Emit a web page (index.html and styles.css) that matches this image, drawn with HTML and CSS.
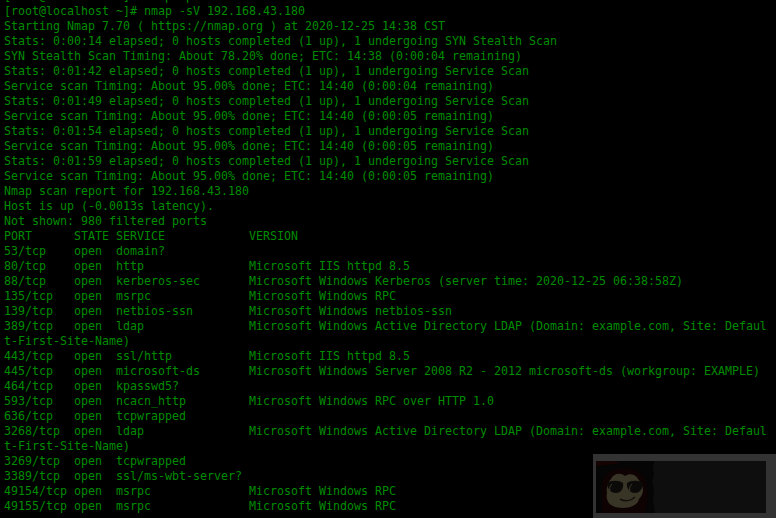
FILE: index.html
```html
<!DOCTYPE html>
<html lang="en">
<head>
<meta charset="utf-8">
<title>nmap</title>
<link rel="stylesheet" href="styles.css">
</head>
<body>
<pre class="term">
[root@localhost ~]# nmap -p 445 192.168.43.180
[root@localhost ~]# nmap -sV 192.168.43.180
Starting Nmap 7.70 ( https://nmap.org ) at 2020-12-25 14:38 CST
Stats: 0:00:14 elapsed; 0 hosts completed (1 up), 1 undergoing SYN Stealth Scan
SYN Stealth Scan Timing: About 78.20% done; ETC: 14:38 (0:00:04 remaining)
Stats: 0:01:42 elapsed; 0 hosts completed (1 up), 1 undergoing Service Scan
Service scan Timing: About 95.00% done; ETC: 14:40 (0:00:04 remaining)
Stats: 0:01:49 elapsed; 0 hosts completed (1 up), 1 undergoing Service Scan
Service scan Timing: About 95.00% done; ETC: 14:40 (0:00:05 remaining)
Stats: 0:01:54 elapsed; 0 hosts completed (1 up), 1 undergoing Service Scan
Service scan Timing: About 95.00% done; ETC: 14:40 (0:00:05 remaining)
Stats: 0:01:59 elapsed; 0 hosts completed (1 up), 1 undergoing Service Scan
Service scan Timing: About 95.00% done; ETC: 14:40 (0:00:05 remaining)
Nmap scan report for 192.168.43.180
Host is up (-0.0013s latency).
Not shown: 980 filtered ports
PORT      STATE SERVICE            VERSION
53/tcp    open  domain?
80/tcp    open  http               Microsoft IIS httpd 8.5
88/tcp    open  kerberos-sec       Microsoft Windows Kerberos (server time: 2020-12-25 06:38:58Z)
135/tcp   open  msrpc              Microsoft Windows RPC
139/tcp   open  netbios-ssn        Microsoft Windows netbios-ssn
389/tcp   open  ldap               Microsoft Windows Active Directory LDAP (Domain: example.com, Site: Defaul
t-First-Site-Name)
443/tcp   open  ssl/http           Microsoft IIS httpd 8.5
445/tcp   open  microsoft-ds       Microsoft Windows Server 2008 R2 - 2012 microsoft-ds (workgroup: EXAMPLE)
464/tcp   open  kpasswd5?
593/tcp   open  ncacn_http         Microsoft Windows RPC over HTTP 1.0
636/tcp   open  tcpwrapped
3268/tcp  open  ldap               Microsoft Windows Active Directory LDAP (Domain: example.com, Site: Defaul
t-First-Site-Name)
3269/tcp  open  tcpwrapped
3389/tcp  open  ssl/ms-wbt-server?
49154/tcp open  msrpc              Microsoft Windows RPC
49155/tcp open  msrpc              Microsoft Windows RPC
</pre>
<div class="badge">
  <div class="badge-inner">
    <svg class="logo" width="62" height="52" viewBox="0 0 62 52">
      <path d="M0 0h58l-1 8 1 6-2 7 2 8-1 9 2 14H0z" fill="#050505"/>
      <path d="M0 0h18l6 3C14 3 8 4 0 5z" fill="#160303"/>
      <path d="M6 52V24C7 12 17 7 29 7c12 0 21 8 22 19 1 9 0 18-2 26z" fill="#0e0202"/>
      <path d="M29 15c4-3 11-2 13 3 3 3 5 7 5 11 0 4-2 7-4 9-1 6-9 9-16 9-8 0-15-3-16-9-1-3 0-5 0-7-1-4 1-10 4-13 2-5 9-7 14-3z" fill="#383426"/>
      <path d="M11 22c4-3 12-3 16 0 1 5-2 10-7 10-6 0-9-5-9-10zM31 22c4-3 12-3 16 0 0 5-3 10-8 10-5 0-9-5-8-10z" fill="#0b0a08"/>
      <path d="M14 30c-1-3 0-5 2-7M34 30c-1-3 0-5 2-7" stroke="#3d3929" stroke-width="1" fill="none"/>
      <path d="M24 38c5 3 11 2 15-2" stroke="#14110c" stroke-width="1.5" fill="none"/>
    </svg>
  </div>
</div>
</body>
</html>
```
FILE: styles.css
```css
html, body {
  margin: 0;
  height: 100%;
  background: #000;
  overflow: hidden;
}
.term {
  margin: -11px 0 0;
  padding: 0 0 0 4px;
  font-family: "DejaVu Sans Mono", monospace;
  font-size: 11.63px;
  line-height: 15px;
  color: #008c00;
  white-space: pre;
}
.badge {
  position: absolute;
  left: 593px;
  top: 454px;
  width: 183px;
  height: 64px;
  box-sizing: border-box;
  padding: 7px 10px 5px 3px;
  background: #333;
}
.badge-inner {
  height: 52px;
  background: #0e0e0e;
}
.logo {
  display: block;
}
```
